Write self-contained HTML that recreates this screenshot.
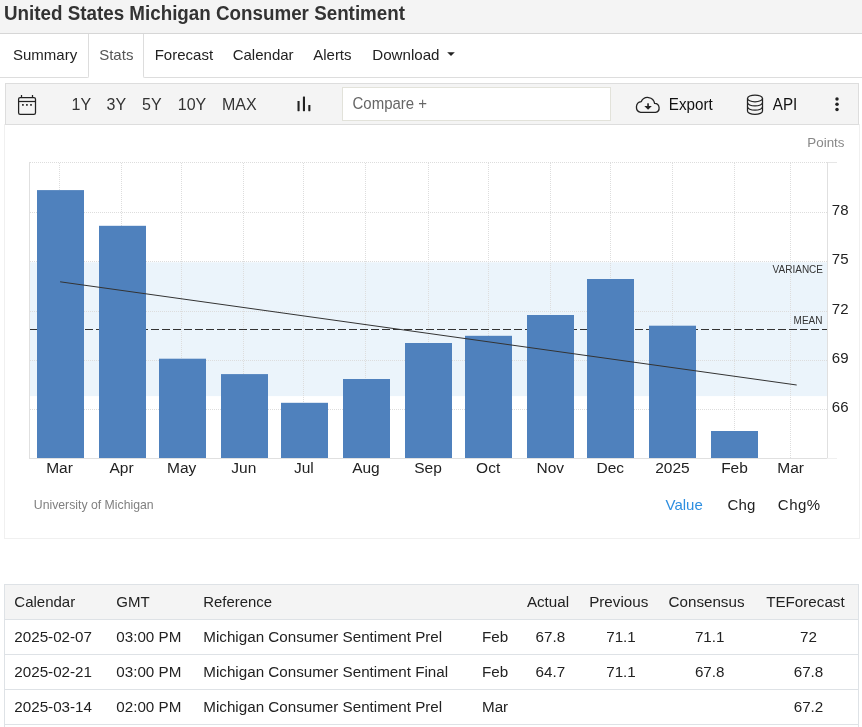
<!DOCTYPE html>
<html><head><meta charset="utf-8">
<style>
*{box-sizing:border-box;margin:0;padding:0}
html,body{width:862px;height:727px;overflow:hidden;background:#fff;font-family:"Liberation Sans",sans-serif}
svg{position:absolute;left:0;top:0;will-change:transform}
</style></head><body>
<div style="position:absolute;left:0px;top:0px;width:862px;height:34px;background:#f4f4f4;border-bottom:1px solid #d6d6d6"></div>
<div style="position:absolute;left:0px;top:34px;width:89px;height:44px;border-right:1px solid #ddd;border-bottom:1px solid #ddd;border-bottom-right-radius:2px"></div>
<div style="position:absolute;left:143px;top:34px;width:719px;height:44px;border-left:1px solid #ddd;border-bottom:1px solid #ddd;border-bottom-left-radius:2px"></div>
<div style="position:absolute;left:5px;top:83px;width:854px;height:42px;background:#f4f4f4;border:1px solid #ddd"></div>
<div style="position:absolute;left:342px;top:87px;width:269px;height:34px;background:#fff;border:1px solid #e2e2da"></div>
<div style="position:absolute;left:4px;top:124px;width:856px;height:415px;border:1px solid #f0f0f0;border-top:none"></div>
<div style="position:absolute;left:4px;top:584px;width:855px;height:143px;border:1px solid #dee2e6;border-bottom:none"></div>
<div style="position:absolute;left:5px;top:585px;width:853px;height:34px;background:#f4f4f4"></div>
<div style="position:absolute;left:5px;top:619px;width:853px;height:1px;background:#dee2e6"></div>
<div style="position:absolute;left:5px;top:654px;width:853px;height:1px;background:#dee2e6"></div>
<div style="position:absolute;left:5px;top:689px;width:853px;height:1px;background:#dee2e6"></div>
<div style="position:absolute;left:5px;top:724px;width:853px;height:1px;background:#dee2e6"></div>
<svg width="862" height="727" viewBox="0 0 862 727" font-family="Liberation Sans, sans-serif">
<path d="M447.2 52.2 H454.8 L451 56 Z" fill="#222"/>
<g fill="none" stroke="#222" stroke-width="1.25">
  <rect x="18.6" y="97.5" width="16.9" height="16.85" rx="1.6"/>
  <line x1="18.6" y1="101.5" x2="35.5" y2="101.5"/>
  <line x1="21.5" y1="95" x2="21.5" y2="97.5"/>
  <line x1="32.5" y1="95" x2="32.5" y2="97.5"/>
</g>
<g fill="#222">
  <rect x="22.05" y="104.05" width="1.7" height="1.7"/>
  <rect x="26.05" y="104.05" width="1.7" height="1.7"/>
  <rect x="30.15" y="104.05" width="1.7" height="1.7"/>
</g>
<g fill="#222">
  <rect x="297.5" y="101" width="2.1" height="10.2" rx="0.4"/>
  <rect x="302.9" y="96.5" width="2.1" height="14.7" rx="0.4"/>
  <rect x="308.3" y="105" width="2.1" height="6.2" rx="0.4"/>
</g>
<path d="M640.6 112.4 A5.5 5.5 0 0 1 641.3 101.6 A7 7 0 0 1 654.6 103.4 A4.55 4.55 0 0 1 655.5 112.4 Z" fill="none" stroke="#222" stroke-width="1.3" stroke-linejoin="round"/>
<rect x="647.25" y="103.3" width="1.6" height="3.4" fill="#222"/>
<path d="M644.3 106.1 H651.8 L648.05 109.8 Z" fill="#222"/>
<g fill="none" stroke="#222" stroke-width="1.25">
  <ellipse cx="755" cy="98.4" rx="7.5" ry="3.4"/>
  <path d="M747.5 98.4 V110.95 A7.5 3.4 0 0 0 762.5 110.95 V98.4"/>
  <path d="M747.5 102.6 A7.5 3.4 0 0 0 762.5 102.6"/>
  <path d="M747.5 106.8 A7.5 3.4 0 0 0 762.5 106.8"/>
</g>
<g fill="#222"><circle cx="837" cy="98.95" r="1.75"/><circle cx="837" cy="104.2" r="1.75"/><circle cx="837" cy="109.5" r="1.75"/></g>
<rect x="30" y="262.3" width="797.5" height="133.8" fill="#ebf4fb"/>
<line x1="30" y1="162.5" x2="827" y2="162.5" stroke="#dddddd" stroke-width="1" stroke-dasharray="1,1"/>
<line x1="30" y1="212.5" x2="827" y2="212.5" stroke="#dddddd" stroke-width="1" stroke-dasharray="1,1"/>
<line x1="30" y1="261.5" x2="827" y2="261.5" stroke="#dddddd" stroke-width="1" stroke-dasharray="1,1"/>
<line x1="30" y1="311.5" x2="827" y2="311.5" stroke="#dddddd" stroke-width="1" stroke-dasharray="1,1"/>
<line x1="30" y1="360.5" x2="827" y2="360.5" stroke="#dddddd" stroke-width="1" stroke-dasharray="1,1"/>
<line x1="30" y1="409.5" x2="827" y2="409.5" stroke="#dddddd" stroke-width="1" stroke-dasharray="1,1"/>
<line x1="59.5" y1="163" x2="59.5" y2="458" stroke="#dddddd" stroke-width="1" stroke-dasharray="1,1"/>
<line x1="121.5" y1="163" x2="121.5" y2="458" stroke="#dddddd" stroke-width="1" stroke-dasharray="1,1"/>
<line x1="181.5" y1="163" x2="181.5" y2="458" stroke="#dddddd" stroke-width="1" stroke-dasharray="1,1"/>
<line x1="243.5" y1="163" x2="243.5" y2="458" stroke="#dddddd" stroke-width="1" stroke-dasharray="1,1"/>
<line x1="303.5" y1="163" x2="303.5" y2="458" stroke="#dddddd" stroke-width="1" stroke-dasharray="1,1"/>
<line x1="365.5" y1="163" x2="365.5" y2="458" stroke="#dddddd" stroke-width="1" stroke-dasharray="1,1"/>
<line x1="428.5" y1="163" x2="428.5" y2="458" stroke="#dddddd" stroke-width="1" stroke-dasharray="1,1"/>
<line x1="488.5" y1="163" x2="488.5" y2="458" stroke="#dddddd" stroke-width="1" stroke-dasharray="1,1"/>
<line x1="550.5" y1="163" x2="550.5" y2="458" stroke="#dddddd" stroke-width="1" stroke-dasharray="1,1"/>
<line x1="610.5" y1="163" x2="610.5" y2="458" stroke="#dddddd" stroke-width="1" stroke-dasharray="1,1"/>
<line x1="672.5" y1="163" x2="672.5" y2="458" stroke="#dddddd" stroke-width="1" stroke-dasharray="1,1"/>
<line x1="734.5" y1="163" x2="734.5" y2="458" stroke="#dddddd" stroke-width="1" stroke-dasharray="1,1"/>
<line x1="790.5" y1="163" x2="790.5" y2="458" stroke="#dddddd" stroke-width="1" stroke-dasharray="1,1"/>
<line x1="29.5" y1="162" x2="29.5" y2="459" stroke="#e0e0e0" stroke-width="1"/>
<line x1="827.5" y1="162" x2="827.5" y2="458" stroke="#e0e0e0" stroke-width="1"/>
<line x1="29" y1="458.5" x2="827" y2="458.5" stroke="#e0e0e0" stroke-width="1"/>
<line x1="827" y1="458.5" x2="837" y2="458.5" stroke="#f0f0f0" stroke-width="1"/>
<line x1="828" y1="162.5" x2="837" y2="162.5" stroke="#e6e6e6" stroke-width="1"/>
<line x1="30" y1="329.5" x2="827" y2="329.5" stroke="#333" stroke-width="1" stroke-dasharray="8,3"/>
<rect x="37" y="190.1" width="47" height="267.9" fill="#4f81bd"/>
<rect x="99" y="225.8" width="47" height="232.2" fill="#4f81bd"/>
<rect x="159" y="358.7" width="47" height="99.3" fill="#4f81bd"/>
<rect x="221" y="374.1" width="47" height="83.9" fill="#4f81bd"/>
<rect x="281" y="402.8" width="47" height="55.2" fill="#4f81bd"/>
<rect x="343" y="379.0" width="47" height="79.0" fill="#4f81bd"/>
<rect x="405" y="343.0" width="47" height="115.0" fill="#4f81bd"/>
<rect x="465" y="335.8" width="47" height="122.2" fill="#4f81bd"/>
<rect x="527" y="315.0" width="47" height="143.0" fill="#4f81bd"/>
<rect x="587" y="279.0" width="47" height="179.0" fill="#4f81bd"/>
<rect x="649" y="325.7" width="47" height="132.3" fill="#4f81bd"/>
<rect x="711" y="431.0" width="47" height="27.0" fill="#4f81bd"/>
<line x1="60.1" y1="281.8" x2="796.7" y2="385" stroke="#333" stroke-width="1"/>
<text transform="translate(4.00,20.00) scale(1,1.03)" font-size="18.8" fill="#333" text-anchor="start" font-weight="bold">United States Michigan Consumer Sentiment</text>
<text transform="translate(13.00,59.50)" font-size="15" fill="#222" text-anchor="start">Summary</text>
<text transform="translate(99.20,59.50)" font-size="15" fill="#555" text-anchor="start">Stats</text>
<text transform="translate(154.70,59.50)" font-size="15" fill="#222" text-anchor="start">Forecast</text>
<text transform="translate(232.70,59.50)" font-size="15" fill="#222" text-anchor="start">Calendar</text>
<text transform="translate(313.20,59.50)" font-size="15" fill="#222" text-anchor="start">Alerts</text>
<text transform="translate(372.20,59.50)" font-size="15.15" fill="#222" text-anchor="start">Download</text>
<text transform="translate(71.50,110.00)" font-size="16" fill="#333" text-anchor="start">1Y</text>
<text transform="translate(106.50,110.00)" font-size="16" fill="#333" text-anchor="start">3Y</text>
<text transform="translate(142.00,110.00)" font-size="16" fill="#333" text-anchor="start">5Y</text>
<text transform="translate(177.80,110.00)" font-size="16" fill="#333" text-anchor="start">10Y</text>
<text transform="translate(222.00,110.00)" font-size="16" fill="#333" text-anchor="start">MAX</text>
<text transform="translate(352.50,108.90) scale(1,1.05)" font-size="15" fill="#666" text-anchor="start">Compare +</text>
<text transform="translate(668.80,110.00) scale(1,1.06)" font-size="15.2" fill="#111" text-anchor="start">Export</text>
<text transform="translate(772.80,110.00) scale(1,1.06)" font-size="15.2" fill="#111" text-anchor="start">API</text>
<text transform="translate(844.50,146.90)" font-size="13.4" fill="#888" text-anchor="end">Points</text>
<text transform="translate(823.00,272.80)" font-size="10" fill="#333" text-anchor="end">VARIANCE</text>
<text transform="translate(822.50,323.80)" font-size="10" fill="#333" text-anchor="end">MEAN</text>
<text transform="translate(831.80,214.50)" font-size="15" fill="#222" text-anchor="start">78</text>
<text transform="translate(831.80,264.00)" font-size="15" fill="#222" text-anchor="start">75</text>
<text transform="translate(831.80,313.70)" font-size="15" fill="#222" text-anchor="start">72</text>
<text transform="translate(831.80,362.90)" font-size="15" fill="#222" text-anchor="start">69</text>
<text transform="translate(831.80,411.50)" font-size="15" fill="#222" text-anchor="start">66</text>
<text transform="translate(59.50,473.00)" font-size="15.5" fill="#222" text-anchor="middle">Mar</text>
<text transform="translate(121.59,473.00)" font-size="15.5" fill="#222" text-anchor="middle">Apr</text>
<text transform="translate(181.68,473.00)" font-size="15.5" fill="#222" text-anchor="middle">May</text>
<text transform="translate(243.78,473.00)" font-size="15.5" fill="#222" text-anchor="middle">Jun</text>
<text transform="translate(303.87,473.00)" font-size="15.5" fill="#222" text-anchor="middle">Jul</text>
<text transform="translate(365.96,473.00)" font-size="15.5" fill="#222" text-anchor="middle">Aug</text>
<text transform="translate(428.05,473.00)" font-size="15.5" fill="#222" text-anchor="middle">Sep</text>
<text transform="translate(488.14,473.00)" font-size="15.5" fill="#222" text-anchor="middle">Oct</text>
<text transform="translate(550.24,473.00)" font-size="15.5" fill="#222" text-anchor="middle">Nov</text>
<text transform="translate(610.33,473.00)" font-size="15.5" fill="#222" text-anchor="middle">Dec</text>
<text transform="translate(672.42,473.00)" font-size="15.5" fill="#222" text-anchor="middle">2025</text>
<text transform="translate(734.51,473.00)" font-size="15.5" fill="#222" text-anchor="middle">Feb</text>
<text transform="translate(790.60,473.00)" font-size="15.5" fill="#222" text-anchor="middle">Mar</text>
<text transform="translate(33.80,509.20)" font-size="12.25" fill="#808080" text-anchor="start">University of Michigan</text>
<text transform="translate(665.50,510.40)" font-size="15" fill="#2e8fe0" text-anchor="start">Value</text>
<text transform="translate(727.50,510.40)" font-size="15" fill="#222" text-anchor="start" letter-spacing="0.2">Chg</text>
<text transform="translate(777.80,510.40)" font-size="15" fill="#222" text-anchor="start" letter-spacing="0.5">Chg%</text>
<text transform="translate(14.30,606.90)" font-size="15" fill="#222" text-anchor="start">Calendar</text>
<text transform="translate(116.30,606.90)" font-size="15" fill="#222" text-anchor="start">GMT</text>
<text transform="translate(203.30,606.90)" font-size="14.9" fill="#222" text-anchor="start">Reference</text>
<text transform="translate(548.00,606.90)" font-size="15.2" fill="#222" text-anchor="middle">Actual</text>
<text transform="translate(618.70,606.90)" font-size="15.2" fill="#222" text-anchor="middle">Previous</text>
<text transform="translate(706.50,606.90)" font-size="15.2" fill="#222" text-anchor="middle">Consensus</text>
<text transform="translate(805.40,606.90)" font-size="15.2" fill="#222" text-anchor="middle">TEForecast</text>
<text transform="translate(14.30,641.80)" font-size="15.2" fill="#222" text-anchor="start">2025-02-07</text>
<text transform="translate(116.30,641.80)" font-size="15.2" fill="#222" text-anchor="start">03:00 PM</text>
<text transform="translate(203.30,641.80)" font-size="15.2" fill="#222" text-anchor="start">Michigan Consumer Sentiment Prel</text>
<text transform="translate(482.00,641.80)" font-size="15.2" fill="#222" text-anchor="start">Feb</text>
<text transform="translate(550.30,641.80)" font-size="15.2" fill="#222" text-anchor="middle">67.8</text>
<text transform="translate(621.00,641.80)" font-size="15.2" fill="#222" text-anchor="middle">71.1</text>
<text transform="translate(709.70,641.80)" font-size="15.2" fill="#222" text-anchor="middle">71.1</text>
<text transform="translate(808.50,641.80)" font-size="15.2" fill="#222" text-anchor="middle">72</text>
<text transform="translate(14.30,676.80)" font-size="15.2" fill="#222" text-anchor="start">2025-02-21</text>
<text transform="translate(116.30,676.80)" font-size="15.2" fill="#222" text-anchor="start">03:00 PM</text>
<text transform="translate(203.30,676.80)" font-size="15.2" fill="#222" text-anchor="start">Michigan Consumer Sentiment Final</text>
<text transform="translate(482.00,676.80)" font-size="15.2" fill="#222" text-anchor="start">Feb</text>
<text transform="translate(550.30,676.80)" font-size="15.2" fill="#222" text-anchor="middle">64.7</text>
<text transform="translate(621.00,676.80)" font-size="15.2" fill="#222" text-anchor="middle">71.1</text>
<text transform="translate(709.70,676.80)" font-size="15.2" fill="#222" text-anchor="middle">67.8</text>
<text transform="translate(808.50,676.80)" font-size="15.2" fill="#222" text-anchor="middle">67.8</text>
<text transform="translate(14.30,711.80)" font-size="15.2" fill="#222" text-anchor="start">2025-03-14</text>
<text transform="translate(116.30,711.80)" font-size="15.2" fill="#222" text-anchor="start">02:00 PM</text>
<text transform="translate(203.30,711.80)" font-size="15.2" fill="#222" text-anchor="start">Michigan Consumer Sentiment Prel</text>
<text transform="translate(482.00,711.80)" font-size="15.2" fill="#222" text-anchor="start">Mar</text>
<text transform="translate(808.50,711.80)" font-size="15.2" fill="#222" text-anchor="middle">67.2</text>
</svg>
</body></html>
